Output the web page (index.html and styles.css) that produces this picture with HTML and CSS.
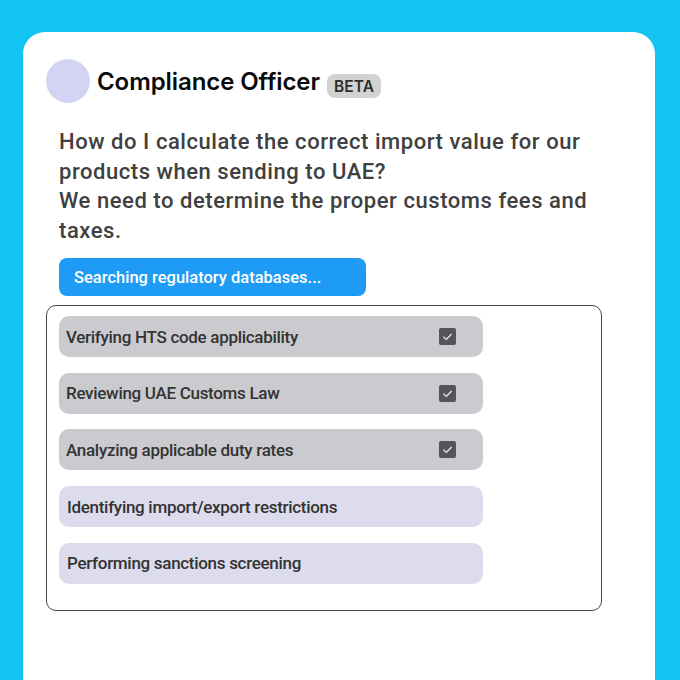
FILE: index.html
```html
<!DOCTYPE html>
<html>
<head>
<meta charset="utf-8">
<link rel="stylesheet" href="styles.css">
</head>
<body>
<div class="card">
  <div class="header">
    <div class="avatar"></div>
    <h1 class="title">Compliance Officer</h1>
    <span class="badge">BETA</span>
  </div>
  <div class="content">
    <p class="question">How do I calculate the correct import value for our products when sending to UAE?<br>We need to determine the proper customs fees and taxes.</p>
    <div class="status">Searching regulatory databases...</div>
    <div class="steps">
      <div class="step done"><span>Verifying HTS code applicability</span><span class="check"><svg viewBox="0 0 17 17" width="17" height="17"><path d="M4.5 8.8 L7.3 11.4 L12.6 6" fill="none" stroke="#e8e8e8" stroke-width="1.3"/></svg></span></div>
      <div class="step done"><span>Reviewing UAE Customs Law</span><span class="check"><svg viewBox="0 0 17 17" width="17" height="17"><path d="M4.5 8.8 L7.3 11.4 L12.6 6" fill="none" stroke="#e8e8e8" stroke-width="1.3"/></svg></span></div>
      <div class="step done"><span>Analyzing applicable duty rates</span><span class="check"><svg viewBox="0 0 17 17" width="17" height="17"><path d="M4.5 8.8 L7.3 11.4 L12.6 6" fill="none" stroke="#e8e8e8" stroke-width="1.3"/></svg></span></div>
      <div class="step pending"><span>Identifying import/export restrictions</span></div>
      <div class="step pending"><span>Performing sanctions screening</span></div>
    </div>
  </div>
</div>
</body>
</html>
```
FILE: styles.css
```css
html, body {
  margin: 0;
  padding: 0;
}
body {
  background: #12c5f3;
  width: 680px;
  height: 680px;
  overflow: hidden;
  font-family: Roboto, "Liberation Sans", sans-serif;
}
.card {
  margin: 32px 25px 0 23px;
  background: #ffffff;
  border-radius: 22px 22px 0 0;
  height: 660px;
  padding: 27px 0 0 23px;
  box-sizing: border-box;
}
.header {
  display: flex;
  align-items: center;
}
.avatar {
  width: 44px;
  height: 44px;
  border-radius: 50%;
  background: #d3d3f4;
  flex: none;
}
.title {
  margin: 0 0 0 7px;
  font-family: Inter, Roboto, sans-serif;
  font-size: 24px;
  font-weight: 600;
  color: #0a0a0a;
  letter-spacing: -0.08px;
}
.badge {
  margin: 9px 0 0 7px;
  background: #d2d2d2;
  color: #2e2e2e;
  font-family: Inter, Roboto, sans-serif;
  font-size: 15.5px;
  font-weight: 600;
  padding: 3px 7px 2px;
  border-radius: 8px;
  letter-spacing: 0.1px;
}
.content {
  padding-left: 13px;
}
.question {
  margin: 24px 0 0 0;
  font-size: 22px;
  font-weight: 500;
  letter-spacing: 0.55px;
  line-height: 29.5px;
  color: #404040;
  width: 545px;
}
.status {
  margin-top: 13px;
  width: 307px;
  height: 38px;
  box-sizing: border-box;
  background: #1e9bf5;
  color: #fff;
  border-radius: 8px;
  font-size: 16.5px;
  font-weight: 500;
  padding-left: 15px;
  display: flex;
  align-items: center;
}
.steps {
  margin: 9px 0 0 -13px;
  width: 556px;
  box-sizing: border-box;
  border: 1px solid #444;
  border-radius: 10px;
  padding: 10px 0 26px 12px;
  display: flex;
  flex-direction: column;
  gap: 15.7px;
}
.step {
  width: 424px;
  height: 41px;
  box-sizing: border-box;
  border-radius: 10px;
  display: flex;
  align-items: center;
  justify-content: space-between;
  padding: 0 27px 0 7px;
  font-size: 17px;
  font-weight: 500;
  letter-spacing: -0.3px;
  color: #333;
}
.step.done {
  background: #cbcbcf;
}
.step.pending {
  background: #dcdcec;
  padding-left: 8px;
}
.check {
  width: 17px;
  height: 17px;
  background: #555558;
  border-radius: 2px;
  display: flex;
}
```
